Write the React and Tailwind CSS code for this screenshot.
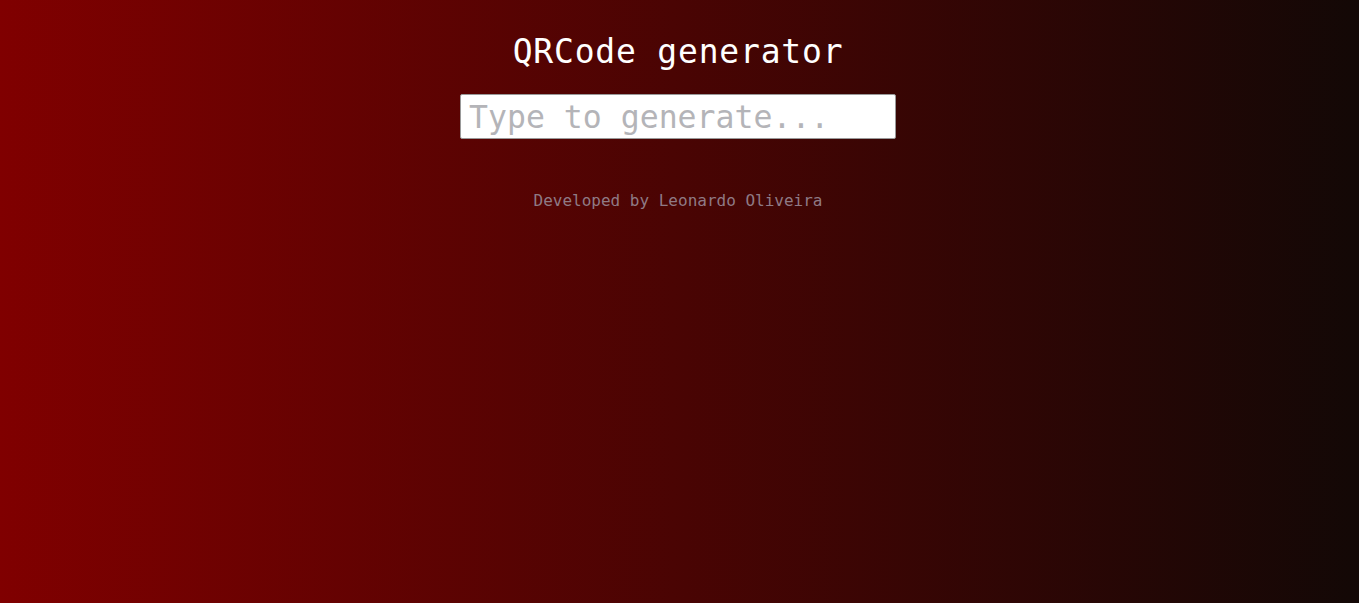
export default function App() {
  return (
    <div
      className="min-h-[603px] w-full bg-[linear-gradient(to_right,#800000,#130806)] flex flex-col items-center"
      style={{ fontFamily: '"DejaVu Sans Mono", "Liberation Mono", monospace' }}
    >
      <h1 className="mt-[30px] ml-[-3px] text-[33px] leading-[44px] text-white font-normal tracking-[0.8px]">
        QRCode generator
      </h1>
      <input
        type="text"
        placeholder="Type to generate..."
        className="mt-[20px] ml-[-3px] w-[436px] h-[45px] bg-white border border-[#999] rounded-[2px] px-[8px] pt-[3px] text-[31.5px] text-black placeholder:text-[#b4b4b8] outline-none"
        style={{ fontFamily: '"DejaVu Sans Mono", "Liberation Mono", monospace' }}
      />
      <p className="mt-[52px] ml-[-3px] text-[16px] leading-[20px] text-[#8f7a85]">
        Developed by Leonardo Oliveira
      </p>
    </div>
  );
}
